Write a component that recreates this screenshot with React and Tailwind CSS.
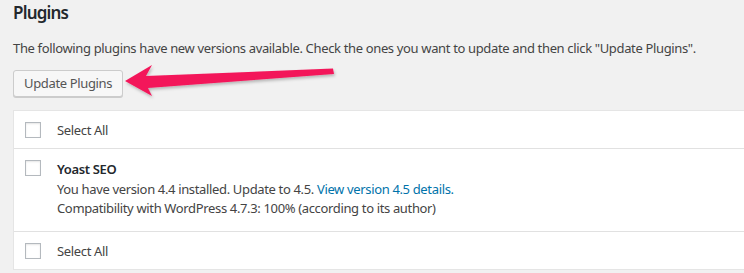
export default function App() {
  const font = { fontFamily: '"Noto Sans", "Open Sans", sans-serif', letterSpacing: "-0.35px" };

  return (
    <div className="relative h-[273px] w-[744px] overflow-hidden bg-[#f1f1f1] pl-[13px] text-[13px] text-[#444]" style={font}>
      <h2 className="pt-[1px] text-[17px] font-semibold leading-[24px] tracking-[-0.8px] text-[#23282d]">Plugins</h2>
      <p className="mt-[14px] leading-[19px]">
        The following plugins have new versions available. Check the ones you want to update and then click "Update Plugins".
      </p>
      <div className="mt-[12px] flex items-center">
        <button className="h-[27px] rounded-[3px] border border-[#ccc] bg-[#f7f7f7] px-[10px] text-[13px] leading-[25px] text-[#555] shadow-[0_1px_0_#ccc]">
          Update Plugins
        </button>
      </div>

      <div className="mt-[13px] border-y border-l border-[#e5e5e5] bg-white">
        <Row label="Select All" />
        <div className="flex border-y border-[#e1e1e1] pt-[10px] pb-[13px]">
          <Box className="mt-[1px]" />
          <div className="ml-[16px] pt-[1px]">
            <div className="font-semibold leading-[18px] text-[#23282d]">Yoast SEO</div>
            <div className="mt-[2px] leading-[19px]">
              You have version 4.4 installed. Update to 4.5.{" "}
              <span className="text-[#0073aa]">View version 4.5 details.</span>
            </div>
            <div className="leading-[19px]">Compatibility with WordPress 4.7.3: 100% (according to its author)</div>
          </div>
        </div>
        <Row label="Select All" />
      </div>

      <svg className="absolute left-0 top-0" width="744" height="273" viewBox="0 0 744 273">
        <defs>
          <filter id="sh" x="-10%" y="-50%" width="120%" height="200%">
            <feDropShadow dx="1" dy="2" stdDeviation="1.5" floodColor="#000" floodOpacity="0.25" />
          </filter>
        </defs>
        <polygon
          points="125,81 152,65 146,76 333,68.5 334,74 148,88 152,96"
          fill="#f3175a"
          filter="url(#sh)"
        />
      </svg>
    </div>
  );
}

function Box({ className = "" }) {
  return (
    <span
      className={`ml-[11px] inline-block h-[16px] w-[16px] shrink-0 border border-[#b4b9be] bg-white shadow-[inset_0_1px_2px_rgba(0,0,0,0.1)] ${className}`}
    />
  );
}

function Row({ label }) {
  return (
    <div className="flex h-[37px] items-center">
      <Box />
      <span className="ml-[16px] pt-[2px]">{label}</span>
    </div>
  );
}
